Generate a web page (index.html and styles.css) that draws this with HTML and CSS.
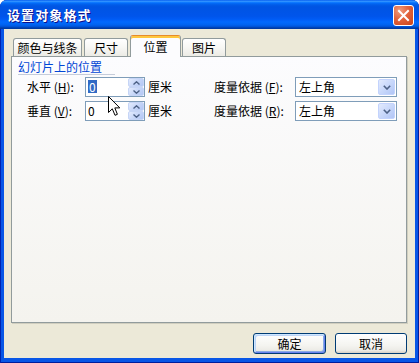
FILE: index.html
```html
<!DOCTYPE html>
<html lang="zh-CN">
<head>
<meta charset="utf-8">
<title>设置对象格式</title>
<link rel="stylesheet" href="styles.css">
</head>
<body>
<div class="window">
  <div class="titlebar">
    <span class="title">设置对象格式</span>
    <span class="close"><svg width="19" height="19" viewBox="0 0 19 19"><path d="M5 5 L14 14 M14 5 L5 14" stroke="#fff" stroke-width="2" stroke-linecap="square"/></svg></span>
  </div>
  <div class="client">
    <div class="tabs">
      <div class="tab t1">颜色与线条</div>
      <div class="tab t2">尺寸</div>
      <div class="tab active">位置</div>
      <div class="tab t4">图片</div>
    </div>
    <div class="panel">
      <div class="group-title">幻灯片上的位置</div>
      <div class="grid">
        <span class="lbl">水平 (<u>H</u>):</span>
        <div class="spin">
          <span class="val"><span class="sel">0</span></span>
          <span class="btns">
            <span class="sb"><svg width="7" height="4" viewBox="0 0 7 4"><path d="M0.5 3.5 L3.5 0.8 L6.5 3.5" fill="none" stroke="#4D6185" stroke-width="1.4"/></svg></span>
            <span class="sb"><svg width="7" height="4" viewBox="0 0 7 4"><path d="M0.5 0.5 L3.5 3.2 L6.5 0.5" fill="none" stroke="#4D6185" stroke-width="1.4"/></svg></span>
          </span>
        </div>
        <span class="unit">厘米</span>
        <span class="lbl">度量依据 (<u>F</u>):</span>
        <div class="select">
          <span class="opt">左上角</span>
          <span class="drop"><svg width="8" height="5" viewBox="0 0 8 5"><path d="M0.8 0.8 L4 4 L7.2 0.8" fill="none" stroke="#4D6185" stroke-width="1.6"/></svg></span>
        </div>

        <span class="lbl">垂直 (<u>V</u>):</span>
        <div class="spin">
          <span class="val">0</span>
          <span class="btns">
            <span class="sb"><svg width="7" height="4" viewBox="0 0 7 4"><path d="M0.5 3.5 L3.5 0.8 L6.5 3.5" fill="none" stroke="#4D6185" stroke-width="1.4"/></svg></span>
            <span class="sb"><svg width="7" height="4" viewBox="0 0 7 4"><path d="M0.5 0.5 L3.5 3.2 L6.5 0.5" fill="none" stroke="#4D6185" stroke-width="1.4"/></svg></span>
          </span>
        </div>
        <span class="unit">厘米</span>
        <span class="lbl">度量依据 (<u>R</u>):</span>
        <div class="select">
          <span class="opt">左上角</span>
          <span class="drop"><svg width="8" height="5" viewBox="0 0 8 5"><path d="M0.8 0.8 L4 4 L7.2 0.8" fill="none" stroke="#4D6185" stroke-width="1.6"/></svg></span>
        </div>
      </div>
    </div>
    <div class="footer">
      <button class="btn default">确定</button>
      <button class="btn">取消</button>
    </div>
  </div>
  <svg class="cursor" width="13" height="21" viewBox="0 0 13 21"><path d="M0.5 0.5 L0.5 16.5 L4.3 12.8 L7 19.3 L9.4 18.3 L6.8 11.9 L11.8 11.9 Z" fill="#fff" stroke="#000" stroke-width="1" stroke-linejoin="miter"/></svg>
</div>
</body>
</html>
```
FILE: styles.css
```css
* { box-sizing: border-box; }
html, body { margin: 0; padding: 0; background: #ffffff; }
body {
  width: 419px;
  height: 363px;
  overflow: hidden;
  font-family: "Noto Sans CJK SC", "Liberation Sans", sans-serif;
  font-size: 12px;
  color: #000;
}
.window {
  position: relative;
  width: 419px;
  height: 363px;
  border-radius: 7px 7px 0 0;
  overflow: hidden;
  display: flex;
  flex-direction: column;
  background: #0856E6;
  box-shadow: inset 1px 0 0 #0023B0, inset -1px 0 0 #001D9C, inset 0 -1px 0 #001D9C;
}
.titlebar {
  height: 29px;
  flex: none;
  display: flex;
  align-items: center;
  justify-content: space-between;
  padding: 0 5px 0 7px;
  background: linear-gradient(to bottom, #0058EE 0%, #3593FF 4%, #288EFF 6%, #127DFF 8%, #036FFC 10%, #0262EE 14%, #0057E5 20%, #0054E3 24%, #0055EB 56%, #005BF5 66%, #026AFE 76%, #0062EF 86%, #0052D6 92%, #0040AB 96%, #0036A0 100%);
}
.title {
  color: #fff;
  font-weight: bold;
  font-size: 13px;
  letter-spacing: 1.1px;
  text-shadow: 1px 1px 0 #0F1089;
  line-height: 16px;
  margin-top: 1px;
}
.close {
  width: 21px;
  height: 21px;
  border: 1px solid #fff;
  border-radius: 3px;
  display: flex;
  align-items: center;
  justify-content: center;
  margin-top: 1px;
  background: radial-gradient(circle at 30% 25%, #F09C7E 0%, #E2633D 45%, #CC4217 100%);
}
.client {
  flex: none;
  height: 329px;
  margin: 0 4px 0 4px;
  background: #ECE9D8;
  display: flex;
  flex-direction: column;
}
.tabs {
  flex: none;
  height: 22px;
  margin-top: 6px;
  padding-left: 9px;
  display: flex;
  align-items: flex-end;
  position: relative;
  z-index: 2;
}
.tab {
  height: 18px;
  margin-bottom: 1px;
  border: 1px solid #919B9C;
  border-bottom: none;
  border-radius: 3px 3px 0 0;
  background: linear-gradient(to bottom, #FFFFFF 0%, #F7F7F4 50%, #ECEBE5 100%);
  text-align: center;
  line-height: 17px;
  white-space: nowrap;
}
.t1 { width: 69px; margin-right: 2px; }
.t2 { width: 44px; margin-right: 2px; }
.active {
  width: 51px;
  height: 22px;
  margin-bottom: 0;
  margin-right: 1px;
  background: #FCFCFE;
  border-top: 1px solid #E68B2C;
  box-shadow: inset 0 2px 0 #FFC73C;
  line-height: 22px;
}
.t4 { width: 44px; }
.panel {
  flex: none;
  height: 267px;
  margin: -1px 8px 0 7px;
  border: 1px solid #919B9C;
  background: linear-gradient(to bottom, #FCFCFE 0%, #F4F3EE 100%);
  box-shadow: 1px 1px 0 #D0CEBF;
  padding: 4px 0 0 6px;
}
.group-title {
  width: 97px;
  height: 14px;
  line-height: 12px;
  color: #0046D5;
  border-bottom: 1px solid #C5CCDA;
}
.grid {
  margin-top: 2px;
  padding-left: 9px;
  display: grid;
  grid-template-columns: 58px 60px 69px 81px 102px;
  grid-auto-rows: 20px;
  row-gap: 4px;
  align-items: center;
}
.lbl { white-space: nowrap; line-height: 20px; }
.lbl u { text-decoration: underline; text-underline-offset: 1px; }
.unit { padding-left: 3px; line-height: 20px; }
.spin {
  height: 20px;
  border: 1px solid #7F9DB9;
  background: #fff;
  display: flex;
}
.val {
  flex: 1;
  padding-left: 2px;
  line-height: 18px;
}
.sel {
  display: inline-block;
  background: #316AC5;
  color: #fff;
  padding: 0 1px;
  line-height: 13px;
  height: 13px;
}
.btns {
  width: 16px;
  display: flex;
  flex-direction: column;
}
.sb {
  flex: 1;
  display: flex;
  align-items: center;
  justify-content: center;
  border: 1px solid #C6D5F6;
  border-radius: 2px;
  background: linear-gradient(135deg, #E3EBFD 0%, #C5D5F8 55%, #B2C6F4 100%);
}
.select {
  height: 20px;
  border: 1px solid #7F9DB9;
  background: #fff;
  display: flex;
}
.opt {
  flex: 1;
  padding-left: 3px;
  line-height: 18px;
}
.drop {
  width: 17px;
  margin: 1px;
  border: 1px solid #C3D3FD;
  border-radius: 2px;
  display: flex;
  align-items: center;
  justify-content: center;
  background: linear-gradient(135deg, #E2EAFD 0%, #C6D6FA 55%, #B1C5F5 100%);
}
.footer {
  flex: none;
  display: flex;
  justify-content: flex-end;
  gap: 9px;
  margin-top: 10px;
  padding-right: 8px;
}
.btn {
  width: 73px;
  height: 21px;
  padding: 0;
  border: 1px solid #003C74;
  border-radius: 3px;
  background: linear-gradient(to bottom, #FFFFFF 0%, #F4F4F0 60%, #ECEBE6 86%, #D6D0C5 100%);
  font-family: "Noto Sans CJK SC", "Liberation Sans", sans-serif;
  font-size: 12px;
  color: #000;
  line-height: 18px;
}
.btn + .btn { width: 72px; }
.default {
  box-shadow: inset 1px 1px 0 #CEE7FF, inset -1px -1px 0 #6982EE, inset 2px 2px 0 #BCD4F6, inset -2px -2px 0 #89ADE4;
}
.cursor {
  position: absolute;
  left: 108px;
  top: 96px;
}
```
